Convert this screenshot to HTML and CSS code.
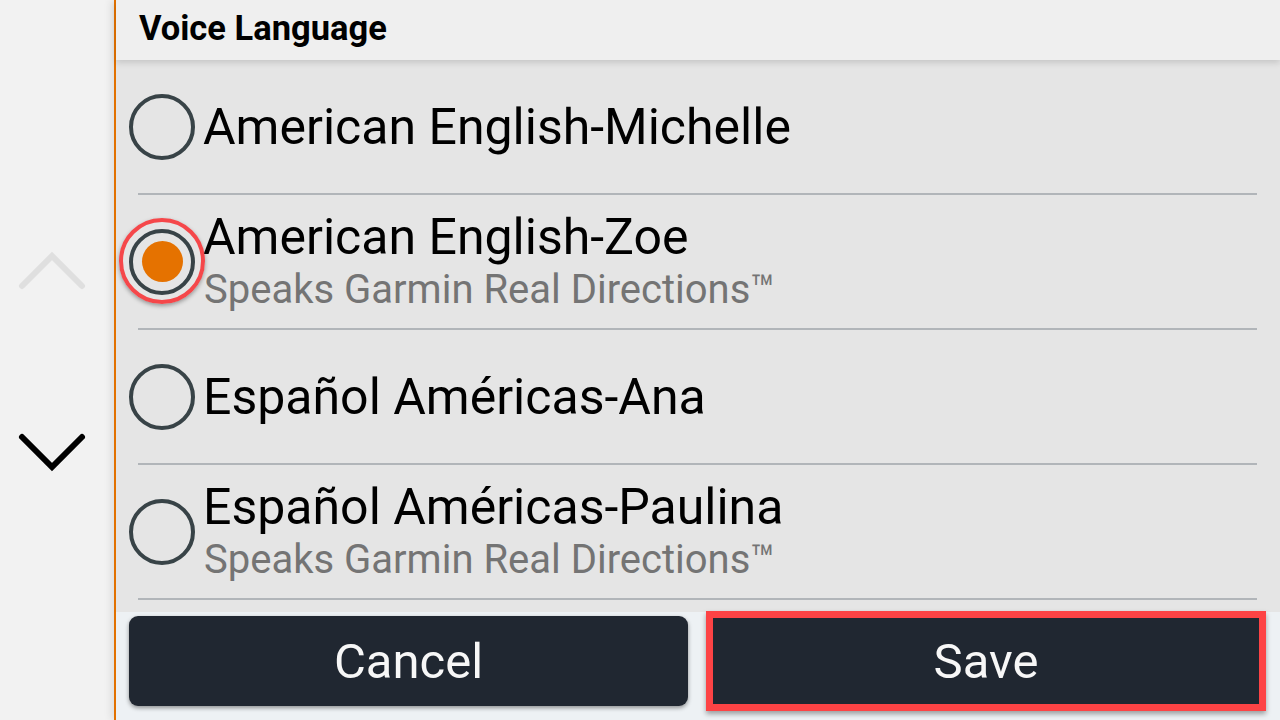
FILE: index.html
```html
<!DOCTYPE html>
<html>
<head>
<meta charset="utf-8">
<link rel="stylesheet" href="styles.css">
</head>
<body>
<div class="screen">
  <aside class="side">
    <svg class="chev" viewBox="0 0 70 44" width="70" height="44"><path d="M5 37 L35 7 L65 37" class="chev-up"/></svg>
    <svg class="chev" viewBox="0 0 70 44" width="70" height="44"><path d="M5 7 L35 37 L65 7" class="chev-down"/></svg>
  </aside>
  <main class="main">
    <header class="head">Voice Language</header>
    <section class="list">
      <div class="row">
        <span class="radio"></span>
        <div class="txt"><div class="title">American English-Michelle</div></div>
      </div>
      <div class="sep"></div>
      <div class="row">
        <span class="radio on"><span class="dot"></span><span class="mark"></span></span>
        <div class="txt two"><div class="title">American English-Zoe</div><div class="sub">Speaks Garmin Real Directions™</div></div>
      </div>
      <div class="sep"></div>
      <div class="row">
        <span class="radio"></span>
        <div class="txt"><div class="title">Español Américas-Ana</div></div>
      </div>
      <div class="sep"></div>
      <div class="row">
        <span class="radio"></span>
        <div class="txt two"><div class="title">Español Américas-Paulina</div><div class="sub">Speaks Garmin Real Directions™</div></div>
      </div>
      <div class="sep"></div>
    </section>
    <footer class="foot">
      <button class="btn cancel">Cancel</button>
      <button class="btn save">Save</button>
    </footer>
  </main>
</div>
</body>
</html>
```

FILE: styles.css
```css
* { box-sizing: border-box; }
html, body { margin: 0; padding: 0; }
body {
  width: 1280px;
  height: 720px;
  overflow: hidden;
  font-family: Roboto, "Liberation Sans", sans-serif;
  background: #f2f2f2;
}
.screen {
  display: flex;
  width: 1280px;
  height: 720px;
}
.side {
  width: 114px;
  flex: none;
  background: #f2f2f2;
  display: flex;
  flex-direction: column;
  align-items: center;
  justify-content: center;
  gap: 137px;
  padding-right: 10px;
  padding-top: 2px;
}
.chev { display: block; }
.chev path { fill: none; stroke-width: 6; stroke-linecap: round; stroke-linejoin: miter; }
.chev-up { stroke: #dfdfdf; }
.chev-down { stroke: #000; }
.main {
  flex: 1;
  display: flex;
  flex-direction: column;
  border-left: 2px solid #e27100;
  box-shadow: -4px 0 7px rgba(0,0,0,0.07);
  position: relative;
  background: #e5e5e5;
}
.head {
  height: 60px;
  flex: none;
  background: #efefef;
  font-weight: 700;
  font-size: 34.5px;
  line-height: 56px;
  padding-left: 23px;
  color: #000;
  box-shadow: 0 3px 6px rgba(0,0,0,0.13);
  position: relative;
  z-index: 1;
}
.list {
  height: 552px;
  flex: none;
  background: #e5e5e5;
  display: flex;
  flex-direction: column;
}
.row {
  height: 133px;
  flex: none;
  display: flex;
  align-items: center;
  padding-left: 13px;
}
.sep {
  height: 2px;
  flex: none;
  margin: 0 23px 0 22px;
  background: #b1b5b9;
}
.radio {
  width: 66px;
  height: 66px;
  flex: none;
  border-radius: 50%;
  border: 4.5px solid #384347;
  position: relative;
  display: flex;
  align-items: center;
  justify-content: center;
}
.radio .dot {
  width: 41px;
  height: 41px;
  border-radius: 50%;
  background: #e57200;
}
.radio .mark {
  position: absolute;
  left: -14.5px;
  top: -14.5px;
  width: 86px;
  height: 86px;
  border-radius: 50%;
  border: 4px solid #f5474a;
  box-shadow: 0 2px 4px rgba(0,0,0,0.35);
}
.txt {
  margin-left: 8px;
  padding-top: 1px;
}
.txt.two { padding-top: 6px; }
.title {
  font-size: 50px;
  line-height: 50px;
  color: #000;
  white-space: nowrap;
}
.sub {
  font-size: 40px;
  line-height: 56px;
  color: #747474;
  white-space: nowrap;
  padding-left: 1px;
}
.foot {
  flex: 1;
  background: #edf1f4;
  display: flex;
  align-items: flex-start;
  padding: 0 12px 0 13px;
  gap: 18px;
  position: relative;
}
.btn {
  font-family: Roboto, "Liberation Sans", sans-serif;
  font-size: 49px;
  color: #f7f7f7;
  background: #202731;
  border: none;
  padding: 0;
  margin: 0;
}
.cancel {
  width: 559px;
  height: 90px;
  margin-top: 4px;
  border-radius: 9px;
  box-shadow: 0 2px 4px rgba(0,0,0,0.4);
}
.save {
  width: 560px;
  height: 100px;
  margin-top: -1px;
  border: 7px solid #fd4345;
  box-shadow: 0 3px 5px rgba(0,0,0,0.35);
}
```
